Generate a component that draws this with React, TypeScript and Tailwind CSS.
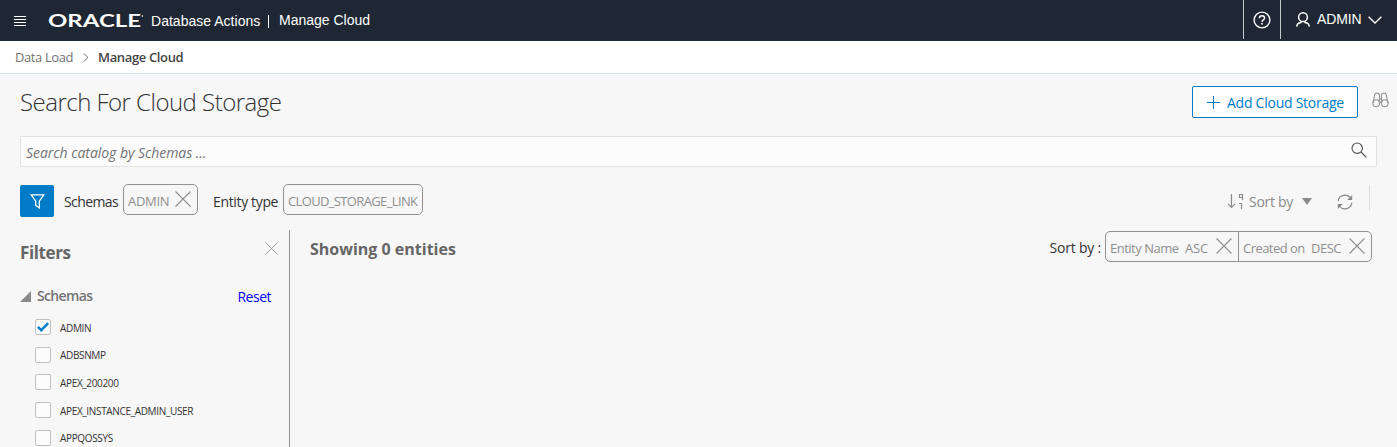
import type { ReactNode } from "react";

type IconProps = { className?: string };

const Cross = ({ className }: IconProps) => (
  <svg viewBox="0 0 16 16" className={className} fill="none" stroke="currentColor" strokeWidth="1.1">
    <path d="M0.5 0.5 15.5 15.5M15.5 0.5 0.5 15.5" />
  </svg>
);

const OracleLogo = ({ className }: IconProps) => (
  <svg viewBox="0 0 98 24" className={className} fill="#fff" role="img" aria-label="Oracle">
    <text
      x="0"
      y="17.5"
      textLength="93"
      lengthAdjust="spacingAndGlyphs"
      fontFamily="Lato, sans-serif"
      fontWeight="700"
      fontSize="16.5"
    >
      ORACLE
    </text>
    <circle cx="94.4" cy="7" r="0.8" />
  </svg>
);

const HelpIcon = ({ className }: IconProps) => (
  <svg viewBox="0 0 18 18" className={className} fill="none" stroke="#fff" strokeWidth="1.4">
    <circle cx="9" cy="9" r="7.9" />
    <path d="M6.4 7.2C6.4 5.6 7.5 4.7 9 4.7s2.6.9 2.6 2.3c0 1.9-2.6 1.9-2.6 4" />
    <path d="M9 12v1.6" strokeWidth="1.6" />
  </svg>
);

const UserIcon = ({ className }: IconProps) => (
  <svg viewBox="0 0 14 15" className={className} fill="none" stroke="#fff" strokeWidth="1.5">
    <ellipse cx="7" cy="5.2" rx="4.4" ry="4.4" />
    <path d="M5.4 9.2 4.9 10.6C2.4 11 .9 12.1.8 14.6M8.6 9.2 9.1 10.6c2.5.4 4 1.5 4.1 4" />
  </svg>
);

const Binoculars = ({ className }: IconProps) => (
  <svg viewBox="0 0 17 16" className={className} fill="none" stroke="#919191" strokeWidth="1.1">
    <path d="M1 11 2.7 3C3 1.6 3.6 1 4.7 1c1.9 0 2.8.7 2.8 2.4v8" />
    <path d="M16 11 14.3 3C14 1.6 13.4 1 12.3 1c-1.9 0-2.8.7-2.8 2.4v8" />
    <ellipse cx="4.2" cy="11.3" rx="3.3" ry="3.5" />
    <ellipse cx="12.8" cy="11.3" rx="3.3" ry="3.5" />
    <path d="M7.5 6.8h2M7.5 10.2h2" />
  </svg>
);

const SearchIcon = ({ className }: IconProps) => (
  <svg viewBox="0 0 16 16" className={className} fill="none" stroke="#4d4d4d" strokeWidth="1.1">
    <circle cx="6.2" cy="6.2" r="5.2" />
    <path d="M10 10 15.3 15.3" />
  </svg>
);

const FunnelIcon = ({ className }: IconProps) => (
  <svg viewBox="0 0 15 15" className={className} fill="none" stroke="#fff" strokeWidth="1.3">
    <path d="M1.2.9h12.6L9.3 7.2v6.7L5.7 11.4V7.2z" />
  </svg>
);

const SortIcon = ({ className }: IconProps) => (
  <svg viewBox="0 0 17 15" className={className} fill="none" stroke="#8a8a8a" strokeWidth="1.2">
    <path d="M4.5 0v13M1 9.8l3.5 3.6L8 9.8" />
    <path d="M15.5 3.5h-3v-3h3v5.8" />
    <path d="M12 9.5h2.5V15" />
  </svg>
);

const RefreshIcon = ({ className }: IconProps) => (
  <svg viewBox="0 0 16 16" className={className} fill="none" stroke="#8a8a8a" strokeWidth="1.2">
    <path d="M1.2 7.2A6.8 6.4 0 0 1 13.6 4M14.8 8.8A6.8 6.4 0 0 1 2.4 12" />
    <path d="M15.2 1v5h-5zM.8 15v-5h5z" fill="#8a8a8a" stroke="none" />
  </svg>
);

function Chip({ children, className }: { children: ReactNode; className: string }) {
  return (
    <div
      className={`flex h-[31px] shrink-0 items-center border border-[#919191] pl-[4px] text-[13px] text-[#8f8f8f] ${className}`}
    >
      {children}
    </div>
  );
}

function TopBar() {
  return (
    <header className="flex h-[41px] shrink-0 items-center bg-[#1e2733] font-['Liberation_Sans',sans-serif] text-[14px] text-white">
      <div className="ml-[14px] flex h-[10px] w-[12px] flex-col justify-between">
        <span className="h-px bg-white" />
        <span className="h-px bg-white" />
        <span className="h-px bg-white" />
        <span className="h-px bg-white" />
      </div>
      <OracleLogo className="ml-[22px] h-[24px] w-[98px] overflow-visible" />
      <span className="ml-[5px] w-[109px] whitespace-nowrap pt-[2px] tracking-[0.02px]">Database Actions</span>
      <span className="ml-[8px] mt-[2px] h-[13px] w-px bg-white" />
      <span className="ml-[10px] whitespace-nowrap">Manage Cloud</span>
      <div className="ml-auto flex h-full w-[154px] items-start">
        <div className="flex h-[39px] w-[38px] items-center justify-center border-x border-[#c4c8cc]">
          <HelpIcon className="size-[18px]" />
        </div>
        <div className="flex h-[39px] items-center">
          <UserIcon className="ml-[15px] h-[15px] w-[14px]" />
          <span className="ml-[7px] w-[44px] tracking-[-0.1px]">ADMIN</span>
          <svg viewBox="0 0 14 8" className="ml-[7px] h-[8px] w-[14px]" fill="none" stroke="#fff" strokeWidth="1.4">
            <path d="M.6.7 7 7 13.4.7" />
          </svg>
        </div>
      </div>
    </header>
  );
}

function Breadcrumb() {
  return (
    <nav className="flex h-[33px] shrink-0 items-center border-b border-[#d6dfe6] bg-white pl-[15px] text-[13px]">
      <span className="w-[58px] whitespace-nowrap pt-px tracking-[-0.4px] text-[#737373]">Data Load</span>
      <svg viewBox="0 0 6 9" className="ml-[10px] h-[9px] w-[6px]" fill="none" stroke="#737373">
        <path d="M.7.4 5 4.5.7 8.6" />
      </svg>
      <span className="ml-[9px] whitespace-nowrap pt-px font-semibold tracking-[-0.35px] text-[#444]">
        Manage Cloud
      </span>
    </nav>
  );
}

const schemas = [
  { name: "ADMIN", checked: true },
  { name: "ADBSNMP", checked: false },
  { name: "APEX_200200", checked: false },
  { name: "APEX_INSTANCE_ADMIN_USER", checked: false },
  { name: "APPQOSSYS", checked: false },
];

function Filters() {
  return (
    <aside className="w-[290px] shrink-0 border-r border-[#919191] pl-[20px]">
      <div className="flex h-[45px] items-center justify-between pr-[11px]">
        <h2 className="text-[17px] font-bold tracking-[-0.4px] text-[#666]">Filters</h2>
        <Cross className="mb-[9px] size-[13px] text-[#919191]" />
      </div>
      <div className="flex h-[42px] items-center">
        <svg viewBox="0 0 11 11" className="h-[11px] w-[11px]" fill="#8a8a8a">
          <path d="M11 0v11H0z" />
        </svg>
        <span className="mb-[2px] ml-[6px] text-[14px] font-semibold tracking-[-0.65px] text-[#737373]">Schemas</span>
        <a className="ml-auto mr-[18px] text-[14px] tracking-[-0.5px] text-[#0000ff]">Reset</a>
      </div>
      <ul className="ml-[15px] mt-[2px] flex flex-col gap-[11.7px]">
        {schemas.map((s) => (
          <li key={s.name} className="flex h-[16px] items-center">
            <span className="flex size-[16px] shrink-0 items-center justify-center rounded-[2px] border border-[#c0c0c0] bg-[#fcfcfc]">
              {s.checked && (
                <svg viewBox="0 0 12 10" className="h-[10px] w-[12px]" fill="none" stroke="#007bc8" strokeWidth="2.4">
                  <path d="M.9 4.8 4.3 8.2 11.2 1.2" />
                </svg>
              )}
            </span>
            <span className="ml-[9px] pt-[2px] text-[10px] tracking-[-0.34px]">{s.name}</span>
          </li>
        ))}
      </ul>
    </aside>
  );
}

export default function App() {
  return (
    <div className="flex h-[447px] w-full flex-col overflow-hidden bg-[#f7f7f7] font-['Open_Sans',sans-serif] text-[#333]">
      <TopBar />
      <Breadcrumb />

      <div className="flex h-[62px] shrink-0 items-start pl-[20px] pr-[8px] pt-[12px]">
        <h1 className="text-[24px] font-light leading-[32px] tracking-[-0.52px]">Search For Cloud Storage</h1>
        <button className="ml-auto flex h-[32px] w-[166px] items-center rounded-[2px] border border-[#007bc8] bg-white pl-[14px] text-[14px] tracking-[-0.25px] text-[#007bc8]">
          <svg viewBox="0 0 13 13" className="mr-[7px] h-[13px] w-[13px]" stroke="currentColor">
            <path d="M6.5 0v13M0 6.5h13" />
          </svg>
          Add Cloud Storage
        </button>
        <Binoculars className="ml-[14px] mt-[6px] h-[16px] w-[17px]" />
      </div>

      <div className="mx-[20px] flex h-[31px] shrink-0 items-center justify-between border border-[#e2e2e2] bg-[#fcfcfc] pl-[5px] pr-[9px]">
        <span className="pt-px text-[14px] italic tracking-[-0.05px] text-[#737373]">Search catalog by Schemas ...</span>
        <SearchIcon className="mb-[3px] size-[16px]" />
      </div>

      <div className="flex h-[63px] shrink-0 items-start pl-[20px] pt-[17px] text-[14px]">
        <div className="mt-px flex h-[32px] w-[34px] items-center justify-center rounded-[2px] bg-[#007bc8]">
          <FunnelIcon className="size-[15px]" />
        </div>
        <div className="flex h-[35px] items-center">
          <span className="ml-[10px] w-[59px] tracking-[-0.6px]">Schemas</span>
        </div>
        <Chip className="w-[75px] rounded-[5px]">
          <span className="w-[47px] pt-[5px] tracking-[-0.3px]">ADMIN</span>
          <Cross className="mb-[2px] size-[16px]" />
        </Chip>
        <div className="flex h-[35px] items-center">
          <span className="ml-[15px] w-[70px] whitespace-nowrap tracking-[-0.35px]">Entity type</span>
        </div>
        <Chip className="w-[140px] rounded-[5px]">
          <span className="pt-[5px] tracking-[-0.64px]">CLOUD_STORAGE_LINK</span>
        </Chip>
        <div className="ml-auto flex h-[35px] items-center text-[#8a8a8a]">
          <SortIcon className="h-[15px] w-[17px]" />
          <span className="ml-[5px] w-[45px] whitespace-nowrap tracking-[-0.3px]">Sort by</span>
          <svg viewBox="0 0 10 7" className="ml-[8px] h-[7px] w-[10px]" fill="#8a8a8a">
            <path d="M0 0h10L5 7z" />
          </svg>
          <RefreshIcon className="ml-[25px] size-[16px]" />
          <span className="mb-[8px] ml-[16px] mr-[27px] h-[26px] w-px bg-[#dcdcdc]" />
        </div>
      </div>

      <div className="flex min-h-0 flex-1">
        <Filters />
        <main className="flex flex-1 items-start pl-[20px] pr-[25px] pt-px">
          <h2 className="pt-[6px] text-[16px] font-bold leading-[24px] text-[#666]">Showing 0 entities</h2>
          <span className="ml-auto mr-[4px] pt-[7px] text-[14px] leading-[20px] tracking-[-0.2px]">Sort by :</span>
          <Chip className="w-[134px] rounded-l-[5px]">
            <span className="w-[75px] whitespace-nowrap pt-[5px] tracking-[-0.5px]">Entity Name</span>
            <span className="w-[31px] pt-[5px] tracking-[-0.2px]">ASC</span>
            <Cross className="mb-[2px] size-[16px]" />
          </Chip>
          <Chip className="-ml-px w-[134px] rounded-r-[5px]">
            <span className="w-[68px] whitespace-nowrap pt-[5px] tracking-[-0.55px]">Created on</span>
            <span className="w-[38px] pt-[5px] tracking-[-0.5px]">DESC</span>
            <Cross className="mb-[2px] size-[16px]" />
          </Chip>
        </main>
      </div>
    </div>
  );
}
